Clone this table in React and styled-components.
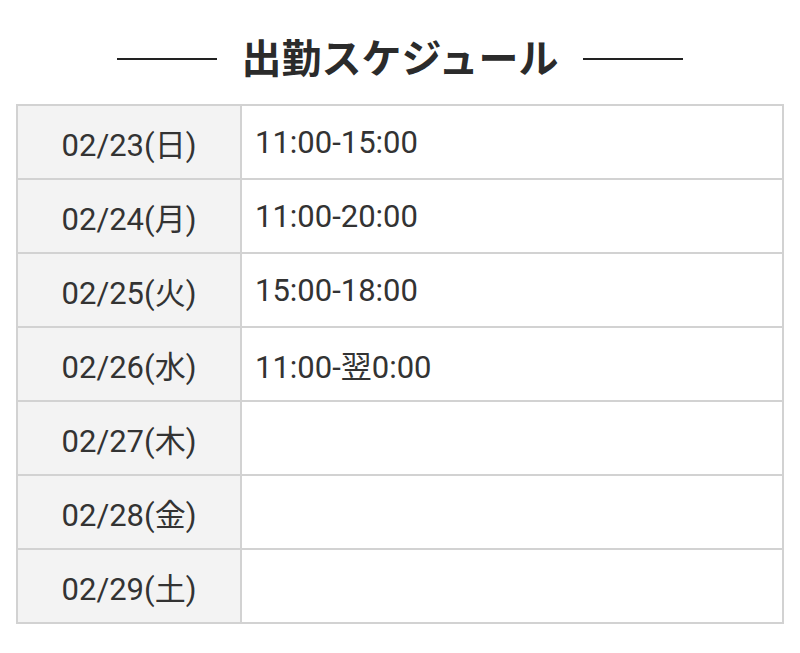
import React from "react";
import styled, { createGlobalStyle } from "styled-components";

const Global = createGlobalStyle`
  html, body { margin: 0; padding: 0; background: #fff; }
  body { font-family: Roboto, "Noto Sans CJK JP", sans-serif; color: #333; }
`;

const Page = styled.div`
  padding: 28px 16px 0 16px;
`;

const Heading = styled.h2`
  display: flex;
  align-items: center;
  justify-content: center;
  gap: 24px;
  margin: 0 0 20px;
  font-family: "Noto Sans CJK JP", sans-serif;
  font-weight: 700;
  font-size: 40px;
  line-height: 56px;
  color: #2b2b2b;
  &::before, &::after {
    content: "";
    width: 100px;
    height: 2px;
    background: #222;
    margin-top: 6px;
  }
`;

const Table = styled.table`
  width: 768px;
  border-collapse: collapse;
  border: 2px solid #d2d2d2;
`;

const Row = styled.tr`
  height: 74px;
`;

const DateCell = styled.th`
  width: 222px;
  background: #f3f3f3;
  border: 2px solid #d2d2d2;
  font-weight: 400;
  font-size: 31px;
  text-align: center;
  padding: 0;
  color: #333;
`;

const TimeCell = styled.td`
  border: 2px solid #d2d2d2;
  font-size: 31px;
  padding: 0 13px;
  text-align: left;
  color: #333;
`;

const data = [
  ["02/23(日)", "11:00-15:00"],
  ["02/24(月)", "11:00-20:00"],
  ["02/25(火)", "15:00-18:00"],
  ["02/26(水)", "11:00-翌0:00"],
  ["02/27(木)", ""],
  ["02/28(金)", ""],
  ["02/29(土)", ""],
];

export default function App() {
  return (
    <Page>
      <Global />
      <Heading>出勤スケジュール</Heading>
      <Table>
        <tbody>
          {data.map(([d, t]) => (
            <Row key={d}>
              <DateCell>{d}</DateCell>
              <TimeCell>{t}</TimeCell>
            </Row>
          ))}
        </tbody>
      </Table>
    </Page>
  );
}
